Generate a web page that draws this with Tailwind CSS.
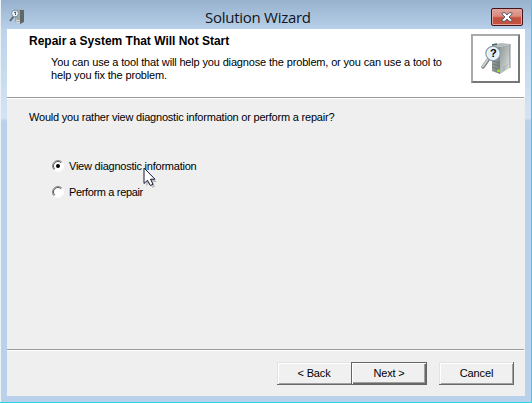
<!DOCTYPE html>
<html lang="en">
<head>
<meta charset="utf-8">
<title>Solution Wizard</title>
<script src="https://cdn.jsdelivr.net/npm/@tailwindcss/browser@4"></script>
</head>
<body class="w-[532px] h-[403px] overflow-hidden bg-[#2ed3e6] font-['Liberation_Sans',Arial,sans-serif] text-[11px] leading-[13px] text-black">
<svg class="absolute w-0 h-0">
  <defs>
    <linearGradient id="side" x1="0" y1="0" x2="1" y2="1"><stop offset="0" stop-color="#a6adac"/><stop offset="1" stop-color="#737b7a"/></linearGradient>
    <linearGradient id="face" x1="0" y1="0" x2="1" y2="1"><stop offset="0" stop-color="#8f9897"/><stop offset=".55" stop-color="#b9c0bf"/><stop offset="1" stop-color="#eef0f0"/></linearGradient>
  </defs>
  <symbol id="server" viewBox="0 0 32 34">
    <path d="M12 3 20 5V32L12 29Z" fill="url(#side)"/>
    <path d="M20 5 30 2V26L20 32Z" fill="url(#face)"/>
    <path d="M12 3 21 1 30 2 20 5Z" fill="#b3bab9"/>
    <path d="M12 3 17 2" stroke="#38655c" stroke-width="1.5"/>
    <path d="M30 2V26" stroke="#727978" stroke-width=".8"/>
    <path d="M12 19 20 21M12 22 20 24M12 25 20 28" stroke="#667271" stroke-width=".8"/>
    <path d="M23 26 28 22M23 28.500 28 24.500" stroke="#929a99" stroke-width="1" stroke-dasharray="1 .6"/>
    <rect x="17" y="27.500" width="3" height="2.6" fill="#8ee51b"/>
    <path d="M8 18 3 25" stroke="#7e8586" stroke-width="3.500" stroke-linecap="round"/>
    <path d="M7.800 17.500 2.800 24.500" stroke="#d2d6d6" stroke-width="1.600" stroke-linecap="round"/>
    <circle cx="13" cy="11.500" r="7" fill="#e0effb" stroke="#8a9da9" stroke-width="1.500"/>
    <circle cx="13" cy="11.500" r="6" fill="none" stroke="#fff" stroke-width=".8"/>
  </symbol>
</svg>
<main class="relative w-[531px] h-[402px] flex flex-col bg-[#b9d1ea] border-l border-[#edf2f7] overflow-hidden">
  <header class="h-[29px] shrink-0 relative flex items-center bg-linear-to-b from-[#97b1ce] to-[#b8d0e9]">
    <svg class="ml-[8px] mt-[4px] w-4 h-[17px]" viewBox="0 0 16 17">
      <path d="M6 2 12 1V16L6 14Z" fill="#9da7a6"/><path d="M11 2 15 2V14L11 16Z" fill="#5e6967"/>
      <path d="M7 12 11 13M7 14 11 15" stroke="#e0e4e3"/>
      <path d="M4.500 8.500 1 13" stroke="#5b6468" stroke-width="1.800"/>
      <circle cx="6" cy="5.500" r="3.400" fill="#ecf5fb" stroke="#788b9b"/>
      <path d="M5 4.500Q7.300 3.200 6.500 5.500V7" fill="none" stroke="#31424e" stroke-width=".9"/>
    </svg>
    <h1 class="grow pl-[180px] pt-[5px] text-[15px] leading-5 tracking-[-0.27px] whitespace-nowrap font-['Open_Sans',sans-serif] text-[#10151b]">Solution Wizard</h1>
    <button class="mr-[8px] mt-[4px] w-8 h-[18px] rounded-[2px] border border-[#43141d] bg-linear-to-b from-[#e1a59c] from-0% via-[#d98a7f] via-45% to-[#c4503e] to-55% shadow-[inset_0_0_0_1px_#e5a499] flex items-center justify-center" aria-label="Close">
      <svg width="12" height="10" viewBox="0 0 12 10"><path d="M1 .8H4L6 3 8 .8H11V2L8 5 11 8V9.200H8L6 7 4 9.200H1V8L4 5 1 2Z" fill="#fff" stroke="#4b5367" stroke-width=".9"/></svg>
    </button>
  </header>
  <div class="flex grow pb-[6px] bg-linear-to-b from-[#bbd3eb] via-[#d5e4f4] via-[89px] to-[#b9d1ea] to-[92px]">
    <section class="ml-[6px] w-[518px] h-[367px] bg-[#efefef] flex flex-col">
      <div class="h-[68px] bg-white flex justify-between shrink-0">
        <div class="pl-[22px] pt-[6px] whitespace-nowrap">
          <h2 class="font-bold text-[12px] leading-[13px] tracking-[-0.01px]">Repair a System That Will Not Start</h2>
          <p class="pl-[22px] mt-[8px] tracking-[-0.155px]">You can use a tool that will help you diagnose the problem, or you can use a tool to<br>help you fix the problem.</p>
        </div>
        <div class="mt-[5px] mr-[5px] w-[49px] h-[49px] border-2 border-t-[#aaa] border-l-[#aaa] border-r-[#777] border-b-[#777] relative">
          <svg class="absolute left-[7px] top-[6px] w-8 h-[34px]"><use href="#server"/></svg>
          <span class="absolute left-[17px] top-[11px] font-bold text-[11px]">?</span>
        </div>
      </div>
      <div class="h-[2px] shrink-0 mr-px border-t border-[#9b9b9b] bg-white"></div>
      <div class="h-[250px] shrink-0 pl-[22px] pt-[12px] whitespace-nowrap">
        <p class="tracking-[-0.21px]">Would you rather view diagnostic information or perform a repair?</p>
        <div class="pl-[23px] mt-[36px] flex flex-col gap-[13px]">
          <label class="flex items-center gap-[5px]">
            <svg class="-mt-[2px]" width="12" height="12" viewBox="0 0 12 12"><circle cx="6" cy="6" r="5" fill="#fff"/><path d="M2.100 9.900A5.500 5.500 0 0 1 9.900 2.100" fill="none" stroke="#8a8a8a"/><path d="M2.800 9.200A4.500 4.500 0 0 1 9.200 2.800" fill="none" stroke="#555"/><path d="M9.900 2.100A5.500 5.500 0 0 1 2.100 9.900" fill="none" stroke="#fff"/><circle cx="6" cy="6" r="2" fill="#000"/></svg>
            <span class="tracking-[-0.23px]">View diagnostic information</span>
          </label>
          <label class="flex items-center gap-[5px]">
            <svg class="-mt-[2px]" width="12" height="12" viewBox="0 0 12 12"><circle cx="6" cy="6" r="5" fill="#fff"/><path d="M2.100 9.900A5.500 5.500 0 0 1 9.900 2.100" fill="none" stroke="#8a8a8a"/><path d="M2.800 9.200A4.500 4.500 0 0 1 9.200 2.800" fill="none" stroke="#555"/><path d="M9.900 2.100A5.500 5.500 0 0 1 2.100 9.900" fill="none" stroke="#fff"/></svg>
            <span class="tracking-[-0.35px]">Perform a repair</span>
          </label>
        </div>
      </div>
      <div class="h-[2px] shrink-0 mr-px border-t border-[#9b9b9b] bg-white"></div>
      <div class="flex justify-end pt-[11px] pr-[11px] tracking-[-0.15px]">
        <button class="w-[74px] h-[23px] bg-[#f0f0f0] border-b border-[#696969] shadow-[inset_1px_1px_#e3e3e3,inset_2px_2px_#fff,inset_0_-1px_#a0a0a0]">&lt; Back</button>
        <button class="w-[76px] h-[23px] bg-[#f0f0f0] border border-[#646464] shadow-[inset_1px_1px_#fff,inset_-1px_-1px_#696969,inset_-2px_-2px_#a0a0a0]">Next &gt;</button>
        <button class="ml-[12px] w-[75px] h-[23px] bg-[#f0f0f0] shadow-[inset_-1px_-1px_#696969,inset_1px_1px_#e3e3e3,inset_2px_2px_#fff,inset_-2px_-2px_#a0a0a0]">Cancel</button>
      </div>
    </section>
  </div>
  <svg class="absolute left-[142px] top-[167px]" width="17" height="23" viewBox="0 0 17 23">
    <path d="M3 3V19L6.500 16 9.500 21 12 19.500 10 15H14Z" fill="#000" opacity=".2"/>
    <path d="M1 1V16.500L4.500 13.300 7.300 18.500 10 17.200 7.500 12.200H12Z" fill="#fff" stroke="#171b38"/>
  </svg>
</main>
</body>
</html>
